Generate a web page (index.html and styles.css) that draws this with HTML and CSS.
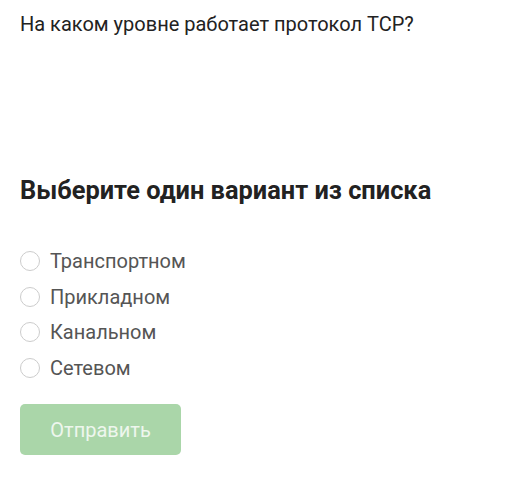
FILE: index.html
```html
<!DOCTYPE html>
<html lang="ru">
<head>
<meta charset="utf-8">
<link rel="stylesheet" href="styles.css">
</head>
<body>
<div class="quiz">
  <p class="question">На каком уровне работает протокол TCP?</p>
  <h2 class="title">Выберите один вариант из списка</h2>
  <ul class="options">
    <li class="option"><span class="radio"></span><span>Транспортном</span></li>
    <li class="option"><span class="radio"></span><span>Прикладном</span></li>
    <li class="option"><span class="radio"></span><span>Канальном</span></li>
    <li class="option"><span class="radio"></span><span>Сетевом</span></li>
  </ul>
  <button class="submit" disabled>Отправить</button>
</div>
</body>
</html>
```
FILE: styles.css
```css
html, body {
  margin: 0;
  padding: 0;
  background: #fff;
}
body {
  font-family: Roboto, "Noto Sans", sans-serif;
  color: #222;
}
.quiz {
  padding: 10px 20px;
}
.question {
  margin: 0;
  font-size: 20px;
  line-height: 28px;
  color: #222;
}
.title {
  margin: 136px 0 0;
  font-size: 25.4px;
  line-height: 32px;
  font-weight: 700;
  color: #222;
}
.options {
  list-style: none;
  margin: 42px 0 0;
  padding: 0;
  display: flex;
  flex-direction: column;
  gap: 9.5px;
}
.option {
  display: flex;
  align-items: center;
  gap: 10px;
  font-size: 20px;
  line-height: 26px;
  color: #555;
}
.radio {
  width: 20px;
  height: 20px;
  border: 1px solid #ccc;
  border-radius: 50%;
  box-sizing: border-box;
  flex: none;
}
.submit {
  display: block;
  margin-top: 23.5px;
  width: 161px;
  height: 51px;
  border: none;
  border-radius: 5px;
  background: #aad6a9;
  color: #eef6ee;
  font-family: Roboto, sans-serif;
  font-size: 20px;
}
```
